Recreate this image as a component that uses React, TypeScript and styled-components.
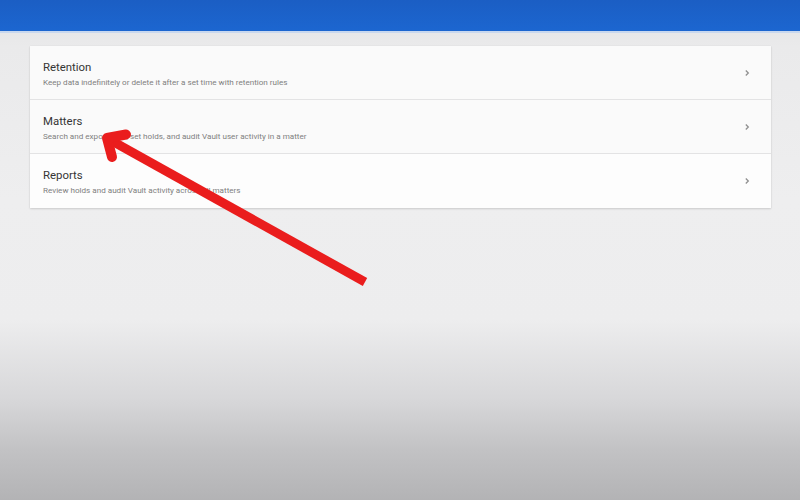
import React from "react";
import styled, { createGlobalStyle } from "styled-components";

const Global = createGlobalStyle`
  html, body { margin: 0; padding: 0; }
  body {
    width: 800px;
    height: 500px;
    overflow: hidden;
    font-family: Roboto, "Noto Sans", Arial, sans-serif;
    background: linear-gradient(
      to bottom,
      #e2e2e3 0px,
      #eaeaeb 46px,
      #eeeeef 200px,
      #ededee 320px,
      #d7d7d9 400px,
      #c2c2c4 450px,
      #b3b3b5 500px
    );
  }
`;

const Page = styled.div`
  position: relative;
  width: 800px;
  height: 500px;
  display: flex;
  flex-direction: column;
`;

const TopBar = styled.header`
  height: 31px;
  flex: none;
  background: linear-gradient(to bottom, #1b5ec4, #1c66d0);
  border-bottom: 2px solid #c9d8ee;
`;

const Main = styled.main`
  padding: 13px 29px 0 30px;
`;

const Card = styled.section`
  background: #fbfbfb;
  box-shadow: 0 1px 2px rgba(0, 0, 0, 0.14), 0 0 1px rgba(0, 0, 0, 0.08);
  display: flex;
  flex-direction: column;
`;

const Row = styled.div<{ $last?: boolean }>`
  display: flex;
  align-items: center;
  padding: 0 20px 0 13px;
  border-bottom: ${(p) => (p.$last ? "none" : "1px solid #e3e3e4")};
  background: ${(p) => (p.$last ? "#fdfdfd" : "#fafafa")};
  height: ${(p) => (p.$last ? "54px" : "53px")};
`;

const Texts = styled.div`
  flex: 1;
  display: flex;
  flex-direction: column;
  gap: 4px;
  padding-top: 1px;
`;

const Title = styled.div`
  font-size: 11.4px;
  line-height: 14px;
  color: #353535;
`;

const Sub = styled.div`
  font-size: 8.1px;
  line-height: 9px;
  color: #808080;
`;

const Chevron = styled.svg`
  width: 8px;
  height: 8px;
  flex: none;
`;

const Arrow = styled.svg`
  position: absolute;
  left: 0;
  top: 0;
  pointer-events: none;
`;

const items = [
  {
    title: "Retention",
    sub: "Keep data indefinitely or delete it after a set time with retention rules",
  },
  {
    title: "Matters",
    sub: "Search and export data, set holds, and audit Vault user activity in a matter",
  },
  {
    title: "Reports",
    sub: "Review holds and audit Vault activity across all matters",
  },
];

export default function App() {
  return (
    <>
      <Global />
      <Page>
        <TopBar />
        <Main>
          <Card>
            {items.map((it, i) => (
              <Row key={it.title} $last={i === items.length - 1}>
                <Texts>
                  <Title>{it.title}</Title>
                  <Sub>{it.sub}</Sub>
                </Texts>
                <Chevron viewBox="0 0 8 8">
                  <path d="M2.8 1.5 L5.3 4 L2.8 6.5" fill="none" stroke="#8f8f8f" strokeWidth="1.3" />
                </Chevron>
              </Row>
            ))}
          </Card>
        </Main>
        <Arrow width="800" height="500" viewBox="0 0 800 500">
          <g stroke="#ea1d1d" fill="none" strokeLinejoin="round">
            <line x1="365" y1="282" x2="112" y2="141" strokeWidth="9" strokeLinecap="butt" />
            <polyline points="126,134.5 107,138 112,157" strokeWidth="10" strokeLinecap="round" />
          </g>
        </Arrow>
      </Page>
    </>
  );
}
